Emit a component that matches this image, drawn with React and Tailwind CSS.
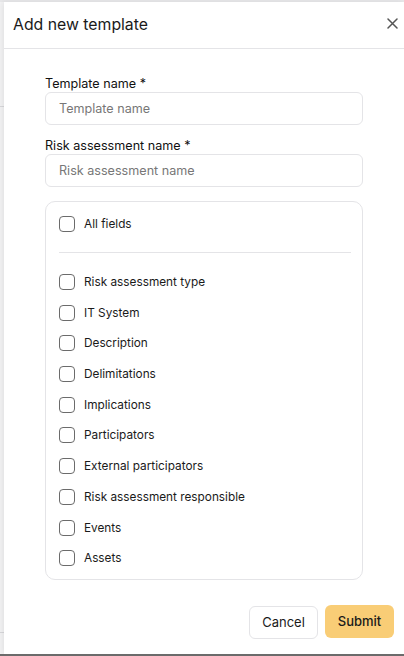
import React from 'react';

const fields = [
  'Risk assessment type',
  'IT System',
  'Description',
  'Delimitations',
  'Implications',
  'Participators',
  'External participators',
  'Risk assessment responsible',
  'Events',
  'Assets',
];

const Checkbox = ({ label }) => (
  <label className="flex items-center h-4 cursor-pointer">
    <span className="w-4 h-4 rounded-[4px] border border-[#6b6b6b] bg-white shrink-0"></span>
    <span className="ml-[9px] text-[11.8px] leading-4 text-[#1a1a1a]">{label}</span>
  </label>
);

export default function App() {
  return (
    <div className="w-[404px] h-[656px] flex flex-col bg-[#f4f4f5] font-['Inter',sans-serif] overflow-hidden">
      <div className="h-[2px] bg-[#e8e8ea] shrink-0"></div>
      <div className="flex flex-1 min-h-0">
        {/* Background page strip */}
        <div className="w-[4px] shrink-0 flex flex-col">
          <div className="h-[105px] border-b border-[#d9d9dc]"></div>
          <div className="flex-1"></div>
          <div className="h-[22px] border-t border-[#d9d9dc]"></div>
        </div>

        {/* Modal */}
        <div className="flex-1 bg-white flex flex-col shadow-[-2px_0_6px_rgba(0,0,0,0.08)]">
          {/* Header */}
          <div className="h-[47px] shrink-0 flex items-center justify-between pl-[9px] pr-[4px] border-b border-[#e4e4e7]">
            <h2 className="text-[15.8px] text-[#1a1a1a] leading-6 -mt-[1px]">Add new template</h2>
            <button className="w-4 h-6 flex items-center justify-center text-[#555] -mt-[4px]">
              <svg className="w-[11px] h-[11px]" viewBox="0 0 11 11" fill="none" stroke="currentColor" strokeWidth="1.5" strokeLinecap="round">
                <path d="M1 1l9 9M10 1L1 10" />
              </svg>
            </button>
          </div>

          {/* Body */}
          <div className="px-[41px] pt-[26px] flex flex-col">
            <label className="text-[12.6px] leading-[17px] text-[#111]">Template name *</label>
            <input
              className="h-[33px] w-full rounded-md border border-[#e4e4e7] px-[13px] text-[12.6px] placeholder-[#777] outline-none"
              placeholder="Template name"
            />
            <label className="mt-[12px] text-[12.6px] leading-[17px] text-[#111]">Risk assessment name *</label>
            <input
              className="h-[33px] w-full rounded-md border border-[#e4e4e7] px-[13px] text-[12.6px] placeholder-[#777] outline-none"
              placeholder="Risk assessment name"
            />

            <div className="mt-[14px] rounded-[10px] border border-[#e4e4e7] pl-[13px] pr-[11px] pt-[14px] pb-[13px]">
              <Checkbox label="All fields" />
              <div className="mt-[20px] border-t border-[#e4e4e7]"></div>
              <div className="mt-[21px] flex flex-col gap-[14.7px]">
                {fields.map((f) => (
                  <Checkbox key={f} label={f} />
                ))}
              </div>
            </div>
          </div>

          {/* Footer */}
          <div className="mt-auto pb-[15px] pr-[10px] flex justify-end items-start gap-[7px]">
            <button className="h-[33px] w-[69px] mt-[1px] rounded-md border border-[#e4e4e7] bg-white text-[13px] text-[#1a1a1a]">
              Cancel
            </button>
            <button className="h-[33px] w-[69px] rounded-md bg-[#f9cd76] text-[13px] font-medium text-[#1a1a1a]">
              Submit
            </button>
          </div>
        </div>
      </div>
      <div className="h-[2px] bg-[#6b6b6b] shrink-0"></div>
    </div>
  );
}
